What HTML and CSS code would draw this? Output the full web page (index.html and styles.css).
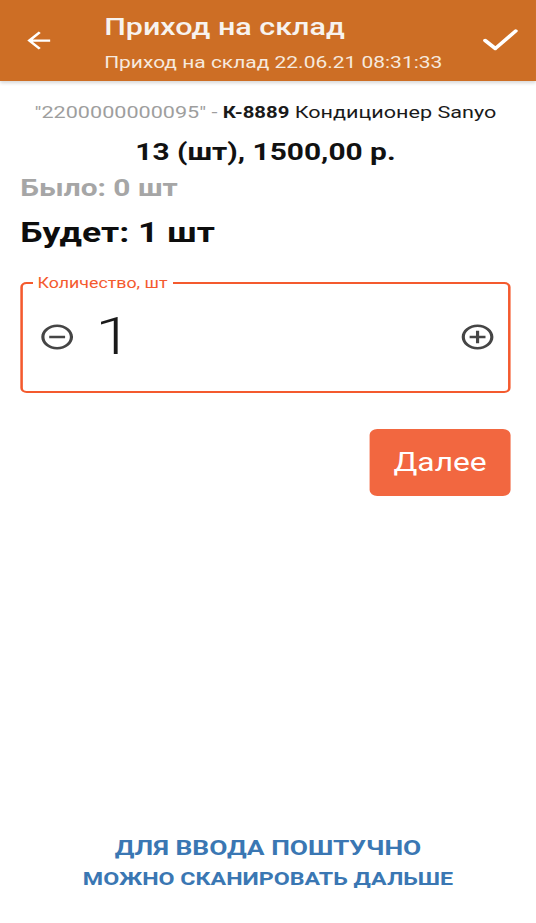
FILE: index.html
```html
<!DOCTYPE html>
<html lang="ru">
<head>
<meta charset="utf-8">
<link rel="stylesheet" href="styles.css">
</head>
<body>
<div class="screen">
  <header class="appbar">
    <button class="icon-btn back" aria-label="Назад">
      <svg width="27" height="27" viewBox="0 0 24 24"><path d="M20 11H7.83l5.59-5.59L12 4l-8 8 8 8 1.41-1.41L7.83 13H20v-2z" fill="#fff"/></svg>
    </button>
    <div class="titles">
      <div class="title">Приход на склад</div>
      <div class="subtitle">Приход на склад 22.06.21 08:31:33</div>
    </div>
    <button class="icon-btn ok" aria-label="Готово">
      <svg width="28" height="26" viewBox="0 0 28 26"><polyline points="2,13.5 10,21.5 26,4" fill="none" stroke="#fff" stroke-width="3.2" stroke-linecap="round" stroke-linejoin="round"/></svg>
    </button>
  </header>

  <main class="content">
    <div class="product"><span class="barcode">"2200000000095" - </span><b>К-8889</b> Кондиционер Sanyo</div>
    <div class="price">13 (шт), 1500,00 р.</div>
    <div class="was">Было: 0 шт</div>
    <div class="will">Будет: 1 шт</div>

    <fieldset class="qty">
      <legend>Количество, шт</legend>
      <div class="qty-row">
        <svg class="qty-icon" width="30" height="30" viewBox="0 0 24 24"><path d="M7 11v2h10v-2H7zm5-9C6.48 2 2 6.480 2 12s4.48 10 10 10 10-4.48 10-10S17.52 2 12 2zm0 18c-4.41 0-8-3.59-8-8s3.59-8 8-8 8 3.59 8 8-3.59 8-8 8z" fill="#454545"/></svg>
        <span class="qty-value">1</span>
        <svg class="qty-icon" width="30" height="30" viewBox="0 0 24 24"><path d="M13 7h-2v4H7v2h4v4h2v-4h4v-2h-4V7zm-1-5C6.48 2 2 6.48 2 12s4.48 10 10 10 10-4.48 10-10S17.52 2 12 2zm0 18c-4.41 0-8-3.59-8-8s3.59-8 8-8 8 3.59 8 8-3.59 8-8 8z" fill="#454545"/></svg>
      </div>
    </fieldset>

    <div class="actions">
      <button class="next">Далее</button>
    </div>
  </main>

  <footer class="hint">
    <div class="hint-1">ДЛЯ ВВОДА ПОШТУЧНО</div>
    <div class="hint-2">МОЖНО СКАНИРОВАТЬ ДАЛЬШЕ</div>
  </footer>
</div>
</body>
</html>
```

FILE: styles.css
```css
* { box-sizing: border-box; }
html, body { margin: 0; padding: 0; background: #fff; overflow: hidden; }
body { font-family: Roboto, "Noto Sans", sans-serif; color: #111; }

/* The reference is a phone screen stretched horizontally (≈1.27×):
   lay out at its natural width and stretch once. */
.screen {
  width: 422px;
  height: 923px;
  display: flex;
  flex-direction: column;
  transform: scaleX(1.2701);
  transform-origin: 0 0;
}

.appbar {
  height: 81px;
  flex: none;
  background: #cd6e25;
  display: flex;
  align-items: flex-start;
  box-shadow: 0 2px 3px rgba(0,0,0,0.16);
  position: relative;
  z-index: 1;
}
.icon-btn {
  background: none;
  border: 0;
  padding: 0;
  display: flex;
  align-items: center;
  justify-content: center;
}
.back { margin: 27px 0 0 16.5px; }
.titles { flex: 1; margin-left: 38.5px; padding-top: 12px; color: #fff; }
.title { font-size: 24px; font-weight: 500; line-height: 30px; color: #f7f3ef; }
.subtitle { font-size: 16.5px; line-height: 24px; margin-top: 9px; color: #f6e9de; }
.ok { margin: 27px 14px 0 0; }

.content {
  flex: 1;
  padding: 19px 20px 0 16px;
}
.product { text-align: center; font-size: 17px; line-height: 24px; color: #1a1a1a; }
.barcode { color: #9e9e9e; }
.product b { font-weight: 700; font-size: 16px; }
.price { text-align: center; font-size: 23.5px; font-weight: 700; line-height: 30px; margin-top: 11.5px; color: #111; }
.was { color: #a6a6a6; font-size: 23.5px; font-weight: 700; line-height: 32px; margin-top: 5.5px; }
.will { font-size: 28px; font-weight: 700; line-height: 36px; margin-top: 11px; color: #0d0d0d; }

.qty {
  margin: 25px 0 0;
  border: 2px solid #f45a2e;
  border-radius: 5px;
  padding: 0 9.5px 7px 12px;
}
.qty legend {
  color: #f45a2e;
  font-size: 14px;
  line-height: 14px;
  padding: 0 4px;
  margin-left: -4.4px;
}
.qty-row {
  display: flex;
  align-items: center;
  height: 94px;
}
.qty-value {
  flex: 1;
  font-size: 52px;
  font-weight: 300;
  margin-left: 15px;
  line-height: 1;
  color: #1a1a1a;
}

.actions {
  display: flex;
  justify-content: flex-end;
  margin-top: 36px;
}
.next {
  width: 111px;
  height: 67px;
  border: 0;
  border-radius: 6px;
  background: #f26740;
  color: #fff;
  font-family: Roboto, sans-serif;
  font-size: 25px;
  font-weight: 400;
}

.hint {
  flex: none;
  text-align: center;
  color: #3a77b3;
  font-weight: 700;
  padding-bottom: 29px;
}
.hint-1 { font-size: 20.8px; line-height: 30px; }
.hint-2 { font-size: 18.3px; line-height: 31px; }
```
